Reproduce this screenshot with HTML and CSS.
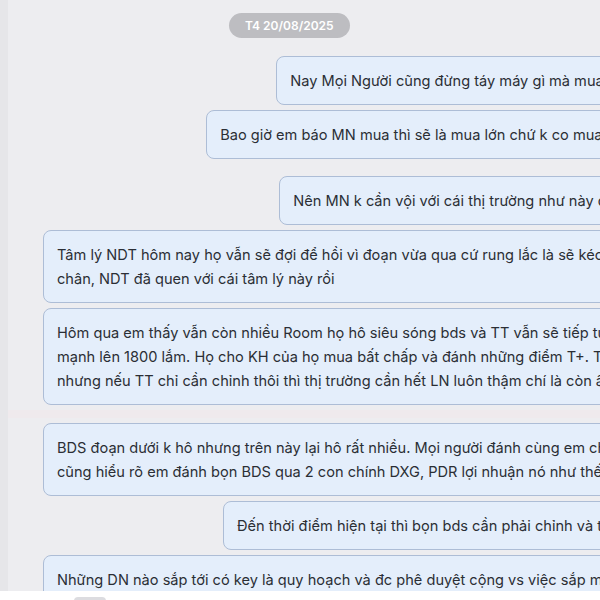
FILE: index.html
```html
<!DOCTYPE html>
<html lang="vi">
<head>
    <meta charset="UTF-8">
    <meta name="viewport" content="width=device-width, initial-scale=1.0">
    <title>Tin nhắn</title>
    <link rel="stylesheet" href="styles.css">
</head>
<body>
    <div class="app">
        <div class="chat">
            <div class="date"><span>T4 20/08/2025</span></div>

            <div class="row mine">
                <div class="bubble">Nay Mọi Người cũng đừng táy máy gì mà mua bán lung tung nhé ạ!</div>
            </div>
            <div class="row mine">
                <div class="bubble">Bao giờ em báo MN mua thì sẽ là mua lớn chứ k co mua nhỏ lẻ như trước đâu</div>
            </div>

            <div class="row mine group">
                <div class="bubble">Nên MN k cần vội với cái thị trường như này đâu, cứ từ từ bình tĩnh</div>
            </div>
            <div class="row">
                <div class="bubble wide">Tâm lý NDT hôm nay họ vẫn sẽ đợi để hồi vì đoạn vừa qua cứ rung lắc là sẽ kéo lên lại từ<br>chân, NDT đã quen với cái tâm lý này rồi</div>
            </div>
            <div class="row">
                <div class="bubble wide">Hôm qua em thấy vẫn còn nhiều Room họ hô siêu sóng bds và TT vẫn sẽ tiếp tục đi lên<br>mạnh lên 1800 lắm. Họ cho KH của họ mua bất chấp và đánh những điểm T+. Tất cả đều hô<br>nhưng nếu TT chỉ cần chỉnh thôi thì thị trường cần hết LN luôn thậm chí là còn âm</div>
            </div>

            <div class="gap"></div>

            <div class="row">
                <div class="bubble wide">BDS đoạn dưới k hô nhưng trên này lại hô rất nhiều. Mọi người đánh cùng em chắc<br>cũng hiểu rõ em đánh bọn BDS qua 2 con chính DXG, PDR lợi nhuận nó như thế nào</div>
            </div>
            <div class="row mine">
                <div class="bubble">Đến thời điểm hiện tại thì bọn bds cần phải chỉnh và tích lũy lại thêm 1 nhịp</div>
            </div>
            <div class="row">
                <div class="bubble wide">Những DN nào sắp tới có key là quy hoạch và đc phê duyệt cộng vs việc sắp mở bán dự án<br>thì vẫn sẽ đi tốt</div>
            </div>
        </div>
        <div class="composer">
            <span class="tool"></span>
        </div>
    </div>
</body>
</html>
```

FILE: styles.css
```css
html {
  font-family: Inter, "Noto Sans", sans-serif;
}

body {
  margin: 0;
  width: 600px;
  height: 600px;
  overflow: hidden;
  background-color: #ededf0;
  color: #2b2e35;
}

.app {
  display: flex;
  flex-direction: column;
  height: 600px;
}

.chat {
  flex: 1;
  overflow: hidden;
  display: flex;
  flex-direction: column;
  gap: 5px;
  width: 720px;
  padding: 13px 20px 0 35px;
  border-left: 8px solid #e6e6e9;
  background-color: #ededf0;
}

.chat > * {
  flex-shrink: 0;
}

.date {
  display: flex;
  padding-left: 186px;
  margin-bottom: 13px;
}

.date span {
  background-color: #bdbdc1;
  color: #fff;
  font-size: 12px;
  font-weight: 600;
  line-height: 25px;
  padding: 0 16px;
  border-radius: 13px;
}

.row {
  display: flex;
}

.row.mine {
  justify-content: flex-end;
}

.row.group {
  margin-top: 12px;
}

.bubble {
  flex-shrink: 0;
  background-color: #e4eefb;
  border: 1px solid #adbdd6;
  border-radius: 8px;
  padding: 12px 13px 11px;
  font-size: 14.6px;
  line-height: 24px;
  white-space: nowrap;
}

.bubble.wide {
  width: 720px;
}

.gap {
  height: 8px;
  margin: 0 -20px 0 -35px;
  background-color: #efeaed;
}

.composer {
  height: 9px;
  background-color: #fff;
  padding-left: 74px;
  overflow: hidden;
}

.tool {
  display: block;
  width: 32px;
  height: 20px;
  margin-top: 6px;
  border-radius: 4px;
  background-color: #dcdce0;
}
```
